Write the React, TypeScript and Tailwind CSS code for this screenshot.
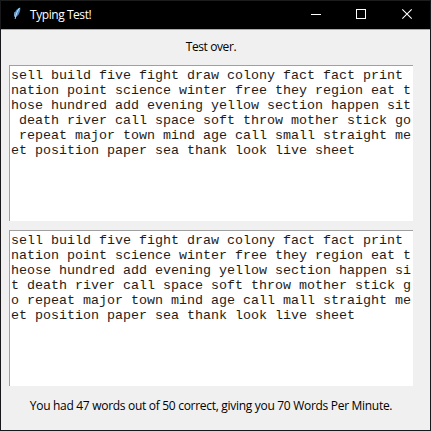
const prompt = [
  'sell build five fight draw colony fact fact print ',
  'nation point science winter free they region eat t',
  'hose hundred add evening yellow section happen sit',
  ' death river call space soft throw mother stick go',
  ' repeat major town mind age call small straight me',
  'et position paper sea thank look live sheet',
];

const typed = [
  'sell build five fight draw colony fact fact print ',
  'nation point science winter free they region eat t',
  'heose hundred add evening yellow section happen si',
  't death river call space soft throw mother stick g',
  'o repeat major town mind age call mall straight me',
  'et position paper sea thank look live sheet',
];

function TextBox({ lines }: { lines: string[] }) {
  return (
    <div className="h-[156px] w-[404px] border-l border-t border-[#a0a0a0] bg-white pl-px pt-0.5">
      <pre className="font-['Liberation_Mono',monospace] text-[13.333px] leading-[15px] text-[#1c1c1c]">
        {lines.join('\n')}
      </pre>
    </div>
  );
}

function TitleBar() {
  return (
    <header className="flex h-[29px] shrink-0 items-center border-t border-[#1c1c1c] bg-black text-white">
      <svg className="ml-[11px] h-4 w-4" viewBox="0 0 16 16" fill="none">
        <path d="M8.200 0.600C4.800 1.600 2.300 5 2.200 9L3.300 10.500C6.500 9 8.800 4.500 8.200 0.600Z" fill="#4b8fd0" />
        <path d="M7.600 1C5.500 3.500 4.200 6.500 3.100 12" stroke="#e4f2ff" strokeWidth="0.8" />
        <path d="M2.800 5L2.500 9.500" stroke="#9bcaf0" strokeWidth="0.7" />
      </svg>
      <h1 className="ml-[2px] grow whitespace-nowrap text-xs leading-4 tracking-[-0.44px]">Typing Test!</h1>
      <div className="flex">
        <svg className="h-7 w-[46px]" viewBox="0 0 46 28" shapeRendering="crispEdges">
          <path d="M19 13.500H29" stroke="white" />
        </svg>
        <svg className="h-7 w-[46px]" viewBox="0 0 46 28" fill="none" shapeRendering="crispEdges">
          <path d="M18.500 8.500H27.500V17.500H18.500Z" stroke="white" />
        </svg>
        <svg className="h-7 w-[46px]" viewBox="0 0 46 28">
          <path d="M18.300 8.300L27.700 17.700M27.700 8.300L18.300 17.700" stroke="white" strokeWidth="1.100" />
        </svg>
      </div>
    </header>
  );
}

export default function App() {
  return (
    <div className="flex h-[431px] w-[431px] flex-col overflow-hidden border-b border-l border-r border-[#18181a] bg-[#f0f0f0] font-['Open_Sans','Noto_Sans',sans-serif] text-xs text-black">
      <TitleBar />
      <main className="flex grow flex-col border-t border-[#aaa] pl-2">
        <p className="mt-[9px] w-[404px] text-center leading-4 tracking-[-0.4px]">Test over.</p>
        <div className="mt-[10px] flex flex-col gap-[9px]">
          <TextBox lines={prompt} />
          <TextBox lines={typed} />
        </div>
        <p className="mt-3 w-[404px] whitespace-nowrap text-center leading-4 tracking-[-0.3px]">
          You had 47 words out of 50 correct, giving you 70 Words Per Minute.
        </p>
      </main>
    </div>
  );
}
